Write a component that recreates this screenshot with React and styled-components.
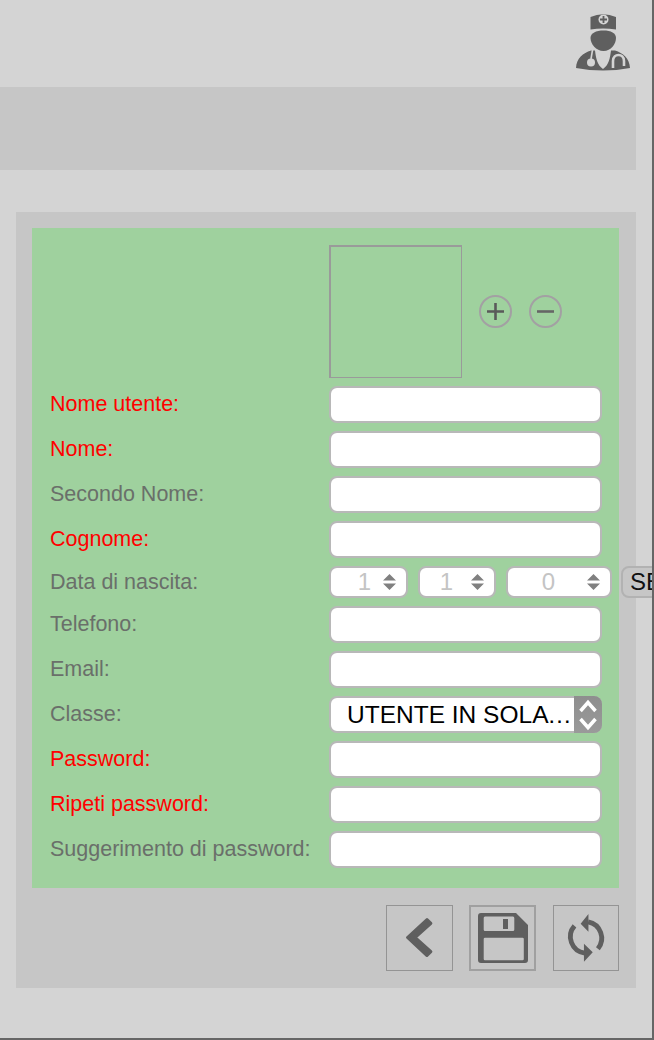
import { Fragment } from "react";
import styled, { createGlobalStyle } from "styled-components";

const GlobalStyle = createGlobalStyle`
  * { box-sizing: border-box; }
  html, body { margin: 0; padding: 0; background: #d4d4d4; }
  body { font-family: "Liberation Sans", Arial, sans-serif; }
`;

const Page = styled.div`
  position: relative;
  width: 654px;
  height: 1040px;
  overflow: hidden;
  background: #d4d4d4;
  border-right: 2px solid #666;
  border-bottom: 2px solid #666;
  &::after {
    content: "";
    position: absolute;
    right: -2px;
    top: 692px;
    width: 2px;
    height: 53px;
    background: #333;
  }
`;

const Header = styled.header`
  height: 87px;
  width: 636px;
  display: flex;
  justify-content: flex-end;
  align-items: flex-start;
  padding: 13px 4px 0 0;
`;

const TitleBar = styled.div`
  width: 636px;
  height: 83px;
  background: #c6c6c6;
`;

const Panel = styled.section`
  width: 620px;
  margin: 42px 0 0 16px;
  padding: 16px 17px 17px 16px;
  background: #c6c6c6;
`;

const FormArea = styled.form`
  display: grid;
  grid-template-columns: 279px 273px;
  row-gap: 8px;
  padding: 17px 0 20px 18px;
  background: #9fd19e;
`;

const Label = styled.label`
  display: flex;
  align-items: center;
  font-size: 21.5px;
  white-space: nowrap;
  color: ${(props) => (props.$required ? "#ff0000" : "#6a6f6a")};
`;

const PhotoRow = styled.div`
  grid-column: 2;
  display: flex;
  align-items: center;
`;

const PhotoBox = styled.div`
  width: 133px;
  height: 133px;
  border: 1px solid #9a9a9a;
  border-top-width: 2px;
  border-left-width: 2px;
`;

const RoundButton = styled.button`
  width: 33px;
  height: 33px;
  margin-left: 17px;
  padding: 0;
  display: flex;
  align-items: center;
  justify-content: center;
  background: transparent;
  border: 2px solid #a3a0a3;
  border-radius: 50%;
`;

const TextField = styled.input`
  width: 273px;
  height: 37px;
  background: #fff;
  border: 2px solid #b8b8b8;
  border-radius: 8px;
  outline: none;
`;

const DateRow = styled.div`
  display: flex;
  width: 330px;
  white-space: nowrap;
`;

const Spinner = styled.div`
  position: relative;
  flex: none;
  width: ${(props) => props.$width}px;
  height: 32px;
  margin-right: ${(props) => props.$gap}px;
`;

const SpinnerInput = styled.input`
  width: 100%;
  height: 100%;
  padding: 0 ${(props) => props.$pad}px 0 0;
  text-align: right;
  font-family: inherit;
  font-size: 24px;
  color: #c4c4c4;
  background: #fff;
  border: 2px solid #b8b8b8;
  border-radius: 8px;
  outline: none;
`;

const SpinnerArrows = styled.svg`
  position: absolute;
  right: 12px;
  top: 7px;
`;

const PickButton = styled.button`
  flex: none;
  width: 120px;
  height: 32px;
  padding: 0 0 0 7px;
  text-align: left;
  font-family: inherit;
  font-size: 24px;
  color: #111;
  background: #c6c6c6;
  border: 2px solid #b2b2b2;
  border-radius: 8px;
`;

const SelectWrap = styled.div`
  position: relative;
  width: 273px;
  height: 37px;
`;

const ClassSelect = styled.select`
  appearance: none;
  width: 100%;
  height: 100%;
  padding: 0 26px 0 16px;
  font-family: inherit;
  font-size: 24.5px;
  color: #000;
  text-overflow: ellipsis;
  background: #fff;
  border: 2px solid #b8b8b8;
  border-radius: 8px;
  outline: none;
`;

const SelectArrows = styled.div`
  position: absolute;
  top: 0;
  right: 0;
  width: 28px;
  height: 37px;
  display: flex;
  align-items: center;
  justify-content: center;
  background: linear-gradient(#8e8e8e, #9a9a9a);
  border-radius: 0 8px 8px 0;
`;

const Actions = styled.div`
  display: flex;
  justify-content: flex-end;
  gap: 16.8px;
  margin-top: 17px;
`;

const ActionButton = styled.button`
  width: 66.4px;
  height: 66px;
  padding: 0;
  display: flex;
  align-items: center;
  justify-content: center;
  background: transparent;
  border: ${(props) => (props.$heavy ? "2px solid #a0a0a0" : "1px solid #949494")};
`;

const DoctorIcon = () => (
  <svg width="56" height="60" viewBox="0 0 56 60">
    <path fill="#5f5f5f" d="M14.5 4 Q27 -1.5 40 4 V16.5 Q27 14.5 14.5 16.5 Z" />
    <circle cx="27.5" cy="6.5" r="5" fill="#d4d4d4" />
    <path stroke="#5f5f5f" strokeWidth="1.8" d="M27.5 3 V10 M24 6.5 H31" />
    <path fill="#5f5f5f" d="M27.5 17.5 C35 17.5 40 20 40 25 C40 31 35 38 27.5 38 C20 38 14.5 31 14.5 25 C14.5 20 20 17.5 27.5 17.5 Z" />
    <path fill="#5f5f5f" d="M15 37.5 L19 37.5 C20 45 21 52 27 56 C33 52 34 45 35 37.5 L39 37.5 C47 40 53.5 45 54 55 Q27 60 0 55 C0.5 45 7 40 15 37.5 Z" />
    <path fill="none" stroke="#d4d4d4" strokeWidth="1.6" d="M16.5 37 L15 46" />
    <circle cx="15" cy="49.5" r="4" fill="#d4d4d4" />
    <path fill="none" stroke="#d4d4d4" strokeWidth="2.6" d="M37 55 V48 C37 40 48 40 48 48 V53" />
  </svg>
);

const PlusIcon = () => (
  <svg width="17" height="17" viewBox="0 0 17 17">
    <path stroke="#5a5a5a" strokeWidth="2.6" d="M8.5 0 V17 M0 8.5 H17" />
  </svg>
);

const MinusIcon = () => (
  <svg width="17" height="17" viewBox="0 0 17 17">
    <path stroke="#666" strokeWidth="2.6" d="M0 8.5 H17" />
  </svg>
);

const BackIcon = () => (
  <svg width="66" height="66" viewBox="0 0 66 66">
    <path fill="#5f5f5f" stroke="#5f5f5f" strokeWidth="3" strokeLinejoin="round" d="M21 32.5 L41 14 L45 18 L29 32.5 L45 47 L41 51 Z" />
  </svg>
);

const SaveIcon = () => (
  <svg width="50" height="50" viewBox="0 0 50 50">
    <path fill="#5f5f5f" fillRule="evenodd" d="M3 0 H38 L50 12 V47 Q50 50 47 50 H3 Q0 50 0 47 V3 Q0 0 3 0 Z M7 3.5 Q5.7 3.5 5.7 5 V16.5 Q5.7 18 7 18 H35 Q36.3 18 36.3 16.5 V5 Q36.3 3.5 35 3.5 Z M25 6 V16 H30 V6 Z M7 24.7 Q5.7 24.7 5.7 26 V46 Q5.7 47.3 7 47.3 H44.5 Q45.8 47.3 45.8 46 V26 Q45.8 24.7 44.5 24.7 Z" />
  </svg>
);

const RefreshIcon = () => (
  <svg width="66" height="66" viewBox="0 0 66 66">
    <path fill="none" stroke="#5f5f5f" strokeWidth="5" d="M35 16.5 A17 17 0 0 1 45 44" />
    <path fill="none" stroke="#5f5f5f" strokeWidth="5" d="M31.5 48.5 A17 17 0 0 1 21 20.5" />
    <path fill="#5f5f5f" d="M35.3 8.3 V26.7 L27.3 18.3 Z M30.7 39 V57.3 L39.7 47.7 Z" />
  </svg>
);

const ArrowsSmall = () => (
  <SpinnerArrows width="13" height="18" viewBox="0 0 13 18">
    <path fill="#808080" d="M6.5 1 L13 7.5 H0 Z M0 10.5 H13 L6.5 17 Z" />
  </SpinnerArrows>
);

const fields = [
  { label: "Nome utente:", required: true },
  { label: "Nome:", required: true },
  { label: "Secondo Nome:" },
  { label: "Cognome:", required: true },
  { label: "Data di nascita:", type: "date" },
  { label: "Telefono:" },
  { label: "Email:" },
  { label: "Classe:", type: "select" },
  { label: "Password:", required: true },
  { label: "Ripeti password:", required: true },
  { label: "Suggerimento di password:" },
];

const dateParts = [
  { value: "1", width: 79, gap: 10, pad: 35 },
  { value: "1", width: 78, gap: 10, pad: 41 },
  { value: "0", width: 106, gap: 9, pad: 55 },
];

const renderField = (field) => {
  if (field.type === "date") {
    return (
      <DateRow>
        {dateParts.map((part, i) => (
          <Spinner key={i} $width={part.width} $gap={part.gap}>
            <SpinnerInput readOnly value={part.value} $pad={part.pad} />
            <ArrowsSmall />
          </Spinner>
        ))}
        <PickButton type="button">SELEZIONA</PickButton>
      </DateRow>
    );
  }
  if (field.type === "select") {
    return (
      <SelectWrap>
        <ClassSelect defaultValue="readonly">
          <option value="readonly">UTENTE IN SOLA LETTURA</option>
        </ClassSelect>
        <SelectArrows>
          <svg width="18" height="37" viewBox="0 0 18 37">
            <path fill="none" stroke="#fff" strokeWidth="3.5" d="M1.5 15 L9 6.5 L16.5 15 M1.5 23 L9 31.5 L16.5 23" />
          </svg>
        </SelectArrows>
      </SelectWrap>
    );
  }
  return <TextField />;
};

export default function App() {
  return (
    <>
      <GlobalStyle />
      <Page>
        <Header>
          <DoctorIcon />
        </Header>
        <TitleBar />
        <Panel>
          <FormArea>
            <PhotoRow>
              <PhotoBox />
              <RoundButton type="button">
                <PlusIcon />
              </RoundButton>
              <RoundButton type="button">
                <MinusIcon />
              </RoundButton>
            </PhotoRow>
            {fields.map((field) => (
              <Fragment key={field.label}>
                <Label $required={field.required}>{field.label}</Label>
                {renderField(field)}
              </Fragment>
            ))}
          </FormArea>
          <Actions>
            <ActionButton type="button">
              <BackIcon />
            </ActionButton>
            <ActionButton type="button" $heavy>
              <SaveIcon />
            </ActionButton>
            <ActionButton type="button">
              <RefreshIcon />
            </ActionButton>
          </Actions>
        </Panel>
      </Page>
    </>
  );
}
